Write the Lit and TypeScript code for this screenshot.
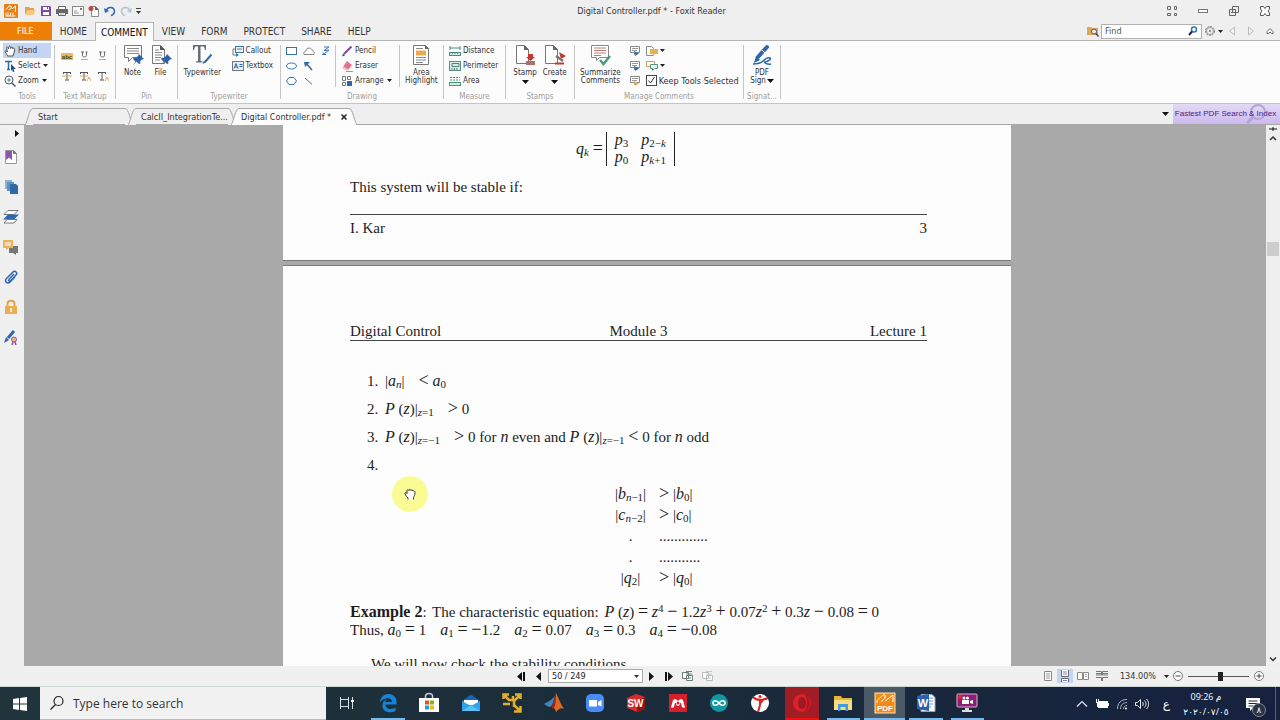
import { LitElement, html, svg, css, TemplateResult } from 'lit';
import { customElement } from 'lit/decorators.js';
import { classMap } from 'lit/directives/class-map.js';

const icon = (w: number, h: number, body: TemplateResult) =>
   html`<svg width="${w}" height="${h}" viewBox="0 0 ${w} ${h}" fill="none" aria-hidden="true">${body}</svg>`;

const caret = icon(5, 3, svg`<path fill="#222" d="M0 0h5L2.500 3z"/>`);
const bigCaret = icon(7, 4, svg`<path fill="#111" d="M0 0h7L3.500 4z"/>`);

// title bar
const logo = icon(14, 14, svg`
   <rect width="14" height="14" rx="1" fill="#ef7d0b"/>
   <path stroke="#fff" d="M2 12.500V8.500M2 5.500l3-3.500h2v2.500L4.500 6M8 5l3.500-3v6M2 12h9.500"/>
   <path stroke="#fff" d="M4 8.500v3M6.500 8.500v3M9 8.500v3"/>`);
const folder = icon(12, 12, svg`
   <path fill="#dda44a" d="M1 2h4l1 1h4v2H4l-3 5z"/><path fill="#f4c77d" d="M4 5h8l-3 5H1z"/>`);
const save = icon(12, 12, svg`
   <path fill="#7c4aa5" d="M1 1h9l1 1v9H1z"/><path fill="#fff" d="M3 2h6v3H3zM3 7h6v3H3z"/><path fill="#7c4aa5" d="M7 2h1v2H7z"/>`);
const print = icon(12, 12, svg`
   <path fill="#666" d="M0 4h12v5H0z"/><path fill="#fff" stroke="#666" d="M2.500 1.500h7v3h-7zM2.500 7.500h7v3h-7z"/><path stroke="#aaa" d="M4 9h4"/>`);
const mail = icon(12, 12, svg`
   <rect x=".5" y="1.500" width="11" height="9" fill="#fafafa" stroke="#888"/><path stroke="#999" d="M2 8h5M2 6h3"/><path fill="#777" d="M8 3h2v2H8z"/>`);
const newPdf = icon(12, 12, svg`
   <path fill="#fff" stroke="#888" d="M3.500 1.500h4l3 3v7h-7z"/><path fill="#666" d="M7 1l4 4H7z"/><circle cx="3" cy="3.500" r="2.500" fill="#c4473a"/>`);
const undo = icon(12, 12, svg`<path stroke="#2d68b0" stroke-width="1.500" d="M2.500 5C4 1.500 10 1.500 10.500 6c0 2.500-2 4-3.500 4.500"/><path fill="#2d68b0" d="M0 3l5 3-4 2z"/>`);
const redo = icon(12, 12, svg`<path stroke="#b5c3d6" stroke-width="1.500" d="M9.500 5C8 1.500 2 1.500 1.500 6c0 2.500 2 4 3.500 4.500"/><path fill="#b5c3d6" d="M12 3L7 6l4 2z"/>`);
const more = icon(5, 6, svg`<path stroke="#444" d="M0 .5h5"/><path fill="#333" d="M0 3h5L2.500 6z"/>`);
const fullIcon = icon(12, 12, svg`<path stroke="#666" d="M1.500 1.500h3v3h-3zM8.500 1.500h2v3h-2zM1.500 8.500h3v2h-3zM8.500 8.500h2v2h-2z"/>`);
const minIcon = icon(12, 12, svg`<rect x="1.500" y="4.500" width="9" height="3" fill="#fff" stroke="#777"/>`);
const maxIcon = icon(12, 12, svg`<path fill="#eee" stroke="#666" d="M4.500 1.500h6v6h-6zM1.500 4.500h6v6h-6z"/><path stroke="#666" d="M3 7.500h3"/>`);
const closeIcon = icon(12, 12, svg`<path fill="#fff" stroke="#555" d="M1.500 1.500h3L6 3.500l1.500-2h3V4L9 6l1.500 2v2.500h-3L6 8.500l-1.500 2h-3V8L3 6 1.500 4z"/>`);

// ribbon
const hand = icon(12, 12, svg`<path fill="#fff" stroke="#555" d="M3.500 11C3 9 1 7.500 1 6c1-.8 2 .5 2.500 1L2.500 2.500c.5-1 1.500-.5 2 1.500L5 1.500c1-.8 1.500 0 1.500 2L7.500 2c1-.5 1.500.5 1 2l1-1c1 0 1.500 1 1 3L9 11z"/>`);
const select = icon(12, 12, svg`<path stroke="#2d68a8" stroke-width="1.500" d="M1 1.500h7M4.500 1.500v8M3 9.500h3"/><path fill="#1c4f8a" d="M7 4l5 5H9.500l1 2.500-1.500.5-1-2.500L7 11z"/>`);
const zoomTool = icon(12, 12, svg`<circle cx="5" cy="5" r="4" stroke="#557"/><path stroke="#3b9576" d="M5 3v4M3 5h4"/><path stroke="#557" stroke-width="1.500" d="M8 8l3.500 3.500"/>`);
const abcMark = icon(12, 10, svg`<rect y="2" width="12" height="7" fill="#efb75e"/><text x="6" y="8" font-size="6" font-family="Liberation Sans" font-weight="700" text-anchor="middle" fill="#443">abc</text>`);
const uMark = icon(12, 10, svg`<path stroke="#666" d="M3.500 1v3.500c0 2 4 2 4 0V1M2 1h3M6.500 1h2"/><path stroke="#e3a84a" d="M2 8.500h7"/>`);
const tMark = icon(12, 12, svg`<path stroke="#555" d="M2 2.500h8M6 2.500v7M4 10h4M2.500 2v2M9.500 2v2"/><path stroke="#e3a84a" d="M1 6h10"/>`);
const tMark2 = icon(12, 12, svg`<path stroke="#555" d="M1 2.500h8M5 2.500v7M3 10h4M1.500 2v2M8.500 2v2"/><path stroke="#e3a84a" d="M1 6h8M8 11l2-4 2 4"/>`);
const tMark3 = icon(12, 12, svg`<path stroke="#555" d="M1 2.500h8M5 2.500v7M3 10h4M1.500 2v2M8.500 2v2"/><path stroke="#e3a84a" d="M8 11l2-4 2 4"/>`);
const pushPin = svg`<path fill="#2b62a5" d="M17 10l5 5-2 .5-2 2 .500 2-1.500.5-2.500-2.500L11 21l2.500-3.500L11 15l1-1.500 2 .5 2-2z"/>`;
const note = icon(22, 22, svg`<path fill="#fff" stroke="#777" d="M2.500 1.500h17v12h-9l-4 4v-4h-4z"/><path stroke="#888" d="M5 4.500h12M5 7h12M5 9.500h12"/>${pushPin}`);
const file = icon(22, 22, svg`<path fill="#fff" stroke="#777" d="M2.500 1.500h8l4 4v14h-12z"/><path fill="#555" d="M10 1l5 5h-5z"/><path stroke="#888" d="M5 6h4M5 8.500h7M5 11h7M5 13.500h6M5 16h5"/>${pushPin}`);
const typewriter = icon(22, 22, svg`<path fill="#666e76" d="M2 1h13v5h-1L13 2.500H9.500V17l2 .5v1H5v-1l2-.5V2.500H4L3 6H2z"/><path stroke="#2f6ea8" stroke-width="2" d="M20.500 10.500L14 18"/><path fill="#2f6ea8" d="M13 16.500l2 2-3.500 1.500z"/>`);
const callout = icon(12, 12, svg`<rect x="3.500" y="1.500" width="8" height="6" stroke="#3a77a8" fill="#eef4f8"/><path stroke="#777" d="M5 4h5M3 4H1v6h3"/><path fill="#3a77a8" d="M4 8l3 2-3 2z"/>`);
const textbox = icon(12, 12, svg`<rect x=".5" y="1.500" width="11" height="9" fill="#e6edf3" stroke="#777"/><path stroke="#2d68a8" d="M2 8.500l2-5 2 5M3 7h2M7.500 4.500h3M7.500 6.500h3"/>`);
const shapeRect = icon(12, 10, svg`<rect x=".5" y="1.500" width="10" height="7" fill="#fff" stroke="#3a74ad"/>`);
const shapeCloud = icon(12, 10, svg`<path stroke="#888" fill="#fff" d="M1 8.500C0 6 2 5 3 5c0-4 6-4 6.500 0 2 .5 2 2 1.500 3.500z"/>`);
const shapeLine = icon(12, 10, svg`<path stroke="#3a74ad" d="M4 1h5L4 4.500l5-.5-5 4-1-1.500M2 8.500h4"/>`);
const shapeEllipse = icon(12, 10, svg`<ellipse cx="5.500" cy="5" rx="5" ry="3" fill="#fff" stroke="#3a74ad"/>`);
const shapeArrow = icon(12, 10, svg`<path stroke="#2d68a8" stroke-width="1.500" d="M3 2l6 7"/><path fill="#2d68a8" d="M1 1h6L2 6z"/>`);
const shapePoly = icon(12, 10, svg`<path fill="#fff" stroke="#3a74ad" d="M3 1.500h5L10.500 5 8 8.500H3L.5 5z"/>`);
const shapeDiag = icon(12, 10, svg`<path stroke="#3a74ad" d="M2 2l7 6.500"/>`);
const pencil = icon(12, 12, svg`<path stroke="#7c4aa5" stroke-width="2" d="M10.500 1.500L3 9"/><path fill="#553" d="M1 11.500l1-3 2 2z"/>`);
const eraser = icon(12, 12, svg`<path fill="#e2728b" d="M6 1l5 4-4 5-5-3z"/><path fill="#f7c3cd" d="M2.500 6.500L7 9.500 6 11 1 8.500z"/><path stroke="#999" d="M5 11.500h7"/>`);
const arrange = icon(12, 12, svg`<path stroke="#777" fill="#fff" d="M1.500 1.500h3v4h-3zM1.500 7.500h3v3h-3zM6.500 1.500h3v3h-3z"/><path fill="#2d68a8" d="M6 6h5v5H6z"/>`);
const areaHighlight = icon(18, 22, svg`<path fill="#fff" stroke="#777" d="M1.500 1.500h12l3 3v16h-15z"/><path fill="#666" d="M13 1l4 4h-4z"/><path stroke="#888" d="M4 4.500h7M4 13.500h10M4 16h10M4 18.500h7"/><rect x="4" y="6.500" width="10" height="5" fill="#eda94b"/>`);
const distance = icon(12, 12, svg`<rect x=".5" y="7.500" width="11" height="3" fill="#d8ece5" stroke="#4a8f7c"/><path stroke="#4a8f7c" d="M1 1v4M11 1v4M1 3h10M3.500 8v1M6 8v1M8.500 8v1"/>`);
const perimeter = icon(12, 12, svg`<rect x=".5" y="1.500" width="11" height="9" fill="#d8ece5" stroke="#5a8f84"/><path stroke="#5a7f7c" d="M3 3.500h7v3H3zM3 8v2M5.500 8v2M8 8v2"/>`);
const area = icon(12, 12, svg`<rect x=".5" y="7.500" width="11" height="3" fill="#d8ece5" stroke="#4a8f7c"/><path stroke="#4a8f7c" stroke-dasharray="2 1" d="M1 2.500h10M1 5h10"/>`);
const stamp = icon(22, 22, svg`<path fill="#fff" stroke="#777" d="M2.500 1.500h8l4 4v14h-12z"/><path fill="#666" d="M10 1l5 5h-5z"/><path fill="#c0392f" d="M14 10h5v3h2l-4.500 4-4.500-4h2z"/><path fill="#a4766f" d="M12 17h9v4h-9z"/>`);
const create = icon(22, 22, svg`<path fill="#fff" stroke="#777" d="M1.500 1.500h8l4 4v14h-12z"/><path fill="#666" d="M9 1l5 5H9z"/><path fill="#c0392f" d="M15 8l7 4-5 3z"/><path stroke="#777" stroke-width="2.500" d="M12 12l7 5"/><path stroke="#c0392f" stroke-width="2" d="M11 19.500h9"/>`);
const summarize = icon(22, 22, svg`<path fill="#fff" stroke="#888" d="M2.500 1.500h17v12h-9l-3 3v-3h-5z"/><path stroke="#c07a6a" d="M5 4h12M5 6.500h12M5 9h12M5 11.500h7"/><path stroke="#4f9a80" stroke-width="2.500" d="M11 16l3.500 4L21 12"/>`);
const commentIn = (c: string) => icon(11, 11, svg`<path fill="#fff" stroke="#888" d="M1.500 1.500h9v6h-3l-2 2v-2h-4z"/><path stroke="#999" d="M3 3.500h6M3 5.500h5"/><path fill="${c}" d="M5 6l5 2.500L6 11z"/>`);
const noteGold = icon(12, 11, svg`<path fill="#fff" stroke="#888" d="M.5 1.500h5l2 2v7h-7z"/><path fill="#e9ae52" d="M4 4h8v5H9l-2 2V9H4z"/>`);
const noteDuo = icon(12, 11, svg`<path fill="#fff" stroke="#d3a050" d="M.5 1.500h8v5h-8z"/><path fill="#e9f1ec" stroke="#5f8f80" d="M4.500 4.500h7v4h-3l-2 2v-2h-2z"/>`);
const pdfSign = icon(22, 22, svg`<path stroke="#2d68a8" stroke-width="4" stroke-linecap="round" d="M16 3L7 13"/><path stroke="#fff" d="M11 6l3 3"/><path fill="#2d68a8" d="M5 12l4 4-6 3z"/><path stroke="#2d68a8" stroke-width="1.500" d="M2 20c6 0 8-1 10-3s5-4 7-3-3 4-5 4 2 3 6 2"/>`);

// side bar
const bookmark = icon(14, 16, svg`<path fill="#fff" stroke="#999" d="M1.500 1.500h8l3 3v10h-11z"/><path fill="#777" d="M9 1l4 4H9z"/><path fill="#8a55b0" d="M2 2h6v9L5 8.500 2 11z"/>`);
const pages = icon(14, 16, svg`<path fill="#8fb3d3" d="M1 1h7v9H1z"/><path fill="#5f92c2" d="M3 3h7v9H3z"/><path fill="#2d68a8" d="M6 5h6l2 2v8H6z"/>`);
const layers = icon(16, 16, svg`<path fill="#fff" stroke="#777" d="M5 1.500h10l-4 4H1z"/><path fill="#2d68b0" d="M5 5.500h11l-5 5H0z"/><path fill="#fff" stroke="#777" d="M4 10.500h10l-3 3.500H1z"/>`);
const comments = icon(16, 16, svg`<path fill="#777" d="M6 7h9v7h-2v2l-3-2H6z"/><path fill="#eab35f" d="M0 1h10v8H6l-3 2V9H0z"/><path stroke="#fff" d="M2 4h6M2 6h6"/>`);
const clip = icon(14, 16, svg`<path stroke="#2d68b0" stroke-width="1.500" d="M10 5L5 10.500c-1 1 .500 2.500 1.500 1.500L12 6c2-2-1-5-3-3L2.500 9.500c-2.500 3 1 6 3.500 3.500l5-5"/>`);
const lock = icon(14, 16, svg`<path stroke="#e0a34c" stroke-width="2" d="M3.500 8V5c0-4.500 7-4.500 7 0v3"/><rect x="1" y="7" width="12" height="8" fill="#e9ae52"/><path stroke="#fff" stroke-width="1.500" d="M7 9v4"/>`);
const signSide = icon(16, 16, svg`<path stroke="#2d68b0" stroke-width="3" d="M11 2L5 9"/><path fill="#2d68b0" d="M3 8l3 3-5 3z"/><circle cx="11" cy="10.500" r="2.500" stroke="#8a55b0" fill="#f1b57a"/><path stroke="#8a55b0" stroke-width="1.500" d="M10 13l-1 3M12 13l1 3"/>`);

// status bar
const firstPage = icon(9, 9, svg`<path fill="#111" d="M5 0v9L0 4.500zM6 0h2v9H6z"/>`);
const prevPage = icon(9, 9, svg`<path fill="#111" d="M7 0v9L2 4.500z"/>`);
const nextPage = icon(9, 9, svg`<path fill="#111" d="M2 0v9l5-4.500z"/>`);
const lastPage = icon(9, 9, svg`<path fill="#111" d="M4 0v9l5-4.500zM1 0h2v9H1z"/>`);
const viewPrev = (c: string, d: string) => icon(12, 12, svg`<path fill="#fff" stroke="${c}" d="M1.500 2.500h6v6h-6zM5.500 5.500h6v5h-6z"/><path stroke="${d}" d="M5 1.500h6M5 4h6M7 8h3"/>`);
const single = icon(10, 12, svg`<path fill="#fff" stroke="#888" d="M1.500 1.500h7v9h-7z"/><path stroke="#999" d="M3 4h4M3 6h4M3 8h4"/>`);
const continuous = icon(10, 12, svg`<path fill="#fff" stroke="#667" d="M1.500 0v6.500h7V0M1.500 12V8.500h7V12"/><path stroke="#889" d="M3 2h4M3 4h4M3 10.500h4"/>`);
const facing = icon(12, 12, svg`<path fill="#fff" stroke="#888" d="M.5 2.500h5v7h-5zM6.500 2.500h5v7h-5z"/><path stroke="#aaa" d="M8 4.500h2M8 6.500h2"/>`);
const facingCont = icon(12, 12, svg`<path stroke="#777" d="M0 1.500h5.500V5H0M12 1.500H6.500V5H12M0 7.500h5.500V11M12 7.500H6.500V11M0 3.500h5M7 3.500h5"/>`);
const minusIcon = icon(12, 12, svg`<circle cx="6" cy="6" r="4.500" fill="#fff" stroke="#777"/><path stroke="#444" d="M3.500 6h5"/>`);
const plusIcon = icon(12, 12, svg`<circle cx="6" cy="6" r="4.500" fill="#fff" stroke="#777"/><path stroke="#444" d="M3.500 6h5M6 3.500v5"/>`);

// find row
const findFolder = icon(12, 12, svg`<path fill="#e0a850" d="M0 2h4l1 1h6v7H0z"/><circle cx="7" cy="6.500" r="2.500" fill="#eee" stroke="#556"/><path stroke="#445" stroke-width="1.500" d="M9 8.500l2.500 3"/>`);
const lens = icon(10, 10, svg`<circle cx="6" cy="3.500" r="2.500" stroke="#2d78c4" stroke-width="1.500"/><path stroke="#224" stroke-width="2" d="M4 5.500L1 9"/>`);
const gear = icon(12, 12, svg`<circle cx="6" cy="6" r="4.500" stroke="#777" stroke-dasharray="2 1"/><circle cx="6" cy="6" r="3.500" stroke="#999"/><circle cx="6" cy="6" r="1" fill="#777"/>`);
const triLeft = icon(8, 10, svg`<path stroke="#bbb" fill="#f5f5f5" d="M6.500 1v8L1.500 5z"/>`);
const triRight = icon(8, 10, svg`<path stroke="#bbb" fill="#f5f5f5" d="M1.500 1v8l5-4z"/>`);
const collapse = icon(8, 8, svg`<path stroke="#666" fill="#fff" d="M4 1.500L7 4.500v2H5.500L4 5 2.500 6.500H1v-2z"/>`);

// task bar
const win = icon(16, 16, svg`<path fill="#fff" d="M1 3l6-1v5.500H1zM8 2l7-1v6.500H8zM1 8.500h6V14l-6-1zM8 8.500h7V15l-7-1z"/>`);
const searchIcon = icon(16, 16, svg`<circle cx="9.500" cy="6" r="4.500" stroke="#222" stroke-width="1.200"/><path stroke="#222" stroke-width="1.200" d="M6.500 9.500L1.500 14.500"/>`);
const taskView = icon(16, 16, svg`<path stroke="#d5dde2" d="M1.500 2v2.500h8V2M1.500 14v-2.500h8V14M1.500 4.500h8v7h-8zM13.500 2v12"/><path fill="#fff" d="M12 5h3v2h-3z"/>`);
const edge = icon(20, 20, svg`<path fill="#1683d8" d="M2 9.500C2.500 4 6 1 10.500 1 16 1 18.500 5 18.500 9v2.500H7.500c0 5 6 5.500 10 3V18c-5 2.500-12 1.500-13-4-.5-3 .5-6 4.500-8-2 2-1.500 3-1.500 3h6.500c0-5-8-5-12 .5z"/>`);
const store = icon(22, 22, svg`<path stroke="#ccd" stroke-width="1.500" d="M7.500 6V4.500c0-4 7-4 7 0V6"/><path fill="#fff" d="M1 6h20v14H1z"/><path fill="#e8502c" d="M7 8.500h4v4H7z"/><path fill="#7db51b" d="M12 8.500h4v4h-4z"/><path fill="#1f9ee3" d="M7 13.500h4v4H7z"/><path fill="#f9b513" d="M12 13.500h4v4h-4z"/>`);
const mailApp = icon(20, 20, svg`<path fill="#1465b4" d="M1 8l9-6.500L19 8v9H1z"/><path fill="#fff" d="M3 7h14v5H3z"/><path fill="#2da3ea" d="M1 8l9 5 9-5v10H1z"/><path fill="#55c3f7" d="M1 18l9-6 9 6z"/>`);
const vmware = icon(22, 22, svg`<path stroke="#e0b02c" stroke-width="2.500" d="M2.500 7V2.500H8M14 2.500h5.500V7M3 3l5 5h4V4M19 3l-6 6v6M2 12h7M13 19.500h6.500V14M19 19l-6-6"/>`);
const matlab = icon(22, 22, svg`<path fill="#3f86c0" d="M1 12l7-4 4-4-3 10-3 1z"/><path fill="#e0671f" d="M13 1c2 4 4 10 8 16-3-2-5 0-8 3-1-4-3-5-4-5 2-3 3-9 4-14z"/><path fill="#8c2c1c" d="M13 1c0 7 0 13-3 16l-2-3c3-3 4-9 5-13z"/>`);
const zoomApp = icon(20, 20, svg`<rect x="1" y="1" width="18" height="18" rx="5" fill="#4a8cf7"/><path fill="#fff" d="M4 7h8v6.500H4zM13 9l3.500-2v6.500L13 12z"/>`);
const solidworks = icon(20, 20, svg`<path fill="#d92b2b" d="M1 5l9-4 9 3v12l-8 3-10-4z"/><path fill="#8f1414" d="M11 8l8-4v12l-8 3z"/><text x="9.500" y="14" font-size="10" font-weight="700" font-family="Liberation Sans" text-anchor="middle" fill="#fff">SW</text>`);
const mendeley = icon(20, 20, svg`<path fill="#d71f2b" d="M1 1h18v18H1z"/><path fill="#fff" d="M3 14c1-1 1-8 4-8 1 0 2 1 3 2 1-1 2-2 3-2 3 0 3 7 4 8 0 1-2 1-3 0-1-2 0-4-2-4 0 2-1 3-2 3s-2-1-2-3c-2 0-1 2-2 4-1 1-3 1-3 0z"/><circle cx="10" cy="10" r="1.500" fill="#d71f2b"/>`);
const arduino = icon(20, 20, svg`<circle cx="10" cy="10" r="9" fill="#1197a0"/><path stroke="#fff" stroke-width="1.500" d="M10 10c-2-3-6-3-6 0s4 3 6 0 6-3 6 0-4 3-6 0z"/>`);
const dancer = icon(20, 20, svg`<circle cx="10" cy="10" r="9" fill="#fff"/><path stroke="#d22" stroke-width="2" d="M3 4c3 3 8 4 15 1M10 6v6l-2 7M10 11l3-4"/><circle cx="10" cy="3.500" r="1.500" fill="#d22"/>`);
const opera = icon(20, 20, svg`<circle cx="10" cy="10" r="9" fill="#dd1f2b"/><path fill="#b3141f" d="M12 1.500c7 2 9 14 0 17 4-3 4-14 0-17z"/><ellipse cx="10" cy="10" rx="4" ry="6" fill="#9c1a22"/>`);
const explorer = icon(20, 20, svg`<path fill="#e9b53d" d="M1 3h7l1 2h10v12H1z"/><path fill="#fbdc7c" d="M1 7h18v10H1z"/><path fill="#3f9adf" d="M5 11h10v7h-2.500v-4h-5v4H5z"/>`);
const foxit = icon(22, 22, svg`<rect x="1" y="1" width="20" height="20" fill="#f28a14" stroke="#fde3bd"/><path stroke="#fff" d="M3 11V9l6-6h2v3L7 10M11 9l8-6v7"/><text x="11" y="19" font-size="8" font-weight="700" font-family="Liberation Sans" text-anchor="middle" fill="#fff">PDF</text>`);
const word = icon(20, 20, svg`<path fill="#fff" stroke="#8ab" d="M5 1.500h11l3 3v14H5z"/><path stroke="#69b" d="M12 5h5M12 8h5M12 11h5M12 14h3"/><path fill="#2b5fb4" d="M1 3l12-2v17L1 16z"/><text x="7" y="14" font-size="11" font-weight="700" font-family="Liberation Sans" text-anchor="middle" fill="#fff">W</text>`);
const recorder = icon(22, 22, svg`<rect x="1" y="2" width="20" height="13" rx="1" fill="#8d1f72" stroke="#d9b5d1"/><path fill="#ddd" d="M9 16h4v2h3v2H6v-2h3z"/><path fill="#fff" d="M6 8h7v4H6zM14 9l3-1v4l-3-1z"/><circle cx="8" cy="6" r="1.500" fill="#fff"/><circle cx="11.500" cy="6" r="1.500" fill="#fff"/><circle cx="4" cy="5" r="2" fill="#e22"/>`);
const chevronUp = icon(12, 12, svg`<path stroke="#e5e8ec" stroke-width="1.200" d="M1 8.500L6 3.500l5 5"/>`);
const battery = icon(14, 12, svg`<rect x="3.500" y="3.500" width="9" height="6" fill="#fff" stroke="#fff"/><path stroke="#fff" d="M13.500 5v3M1.500 1v3M3.500 1v3M1 4.500h3M2.500 5v4"/>`);
const wifi = icon(12, 12, svg`<path stroke="#aab3c0" d="M1.500 11C1.500 5 5 1.500 11 1.500M4.500 11c0-4 2.500-6.500 6.500-6.500M7.500 11c0-2 1.500-3.500 3.500-3.500"/><circle cx="10" cy="10.500" r="1" fill="#fff"/>`);
const volume = icon(14, 12, svg`<path stroke="#e5e8ec" d="M.5 4.500h2l3-3v9l-3-3h-2zM7.500 4c1 1.500 1 2.500 0 4M9.500 2.500c2 2.500 2 4.500 0 7M11.500 1c3 3.500 3 6.500 0 10"/>`);
const notify = icon(14, 14, svg`<path fill="#fff" d="M0 1h14v10H7l-3 3v-3H0z"/><path stroke="#1a2744" d="M2.500 4h9M2.500 6.500h9M2.500 9h5"/>`);
const grabHand = icon(12, 14, svg`<path fill="#fff" stroke="#333" d="M4 12.500V11C2 9 .5 7 1 6s1.500-.5 2 .500V3.500c0-1 1.500-1 2 0 0-1.500 1.500-1.500 2 0 0-1 1.500-1 2 .500 1-.5 2 0 2 1.500 0 2.500-1 4-1.500 5v2"/>`);

@customElement('title-bar')
export class TitleBar extends LitElement {

   static styles = css`
      :host { display: block; }
      svg { display: block; }
      .title-bar { display: grid; grid-template-columns: 1fr auto 1fr; align-items: center; height: 22px; padding: 0 9px 0 4px; }
      .quick, .window { display: flex; align-items: center; }
      .quick { gap: 4px; }
      .window { gap: 19px; justify-content: flex-end; }
      .title { font-size: 9px; padding-left: 28px; }
      button { border: 0; background: none; padding: 0; font: inherit; color: inherit; }
      .app { margin-right: 2px; }
   `;

   render() {
      return html`
         <header class="title-bar">
            <div class="quick">
               <span class="app">${logo}</span>
               ${[['Open', folder], ['Save', save], ['Print', print], ['Email', mail], ['New', newPdf], ['Undo', undo], ['Redo', redo], ['Customize', more]].map(
                  ([label, pic]) => html`<button aria-label=${label}>${pic}</button>`)}
            </div>
            <div class="title">Digital Controller.pdf * - Foxit Reader</div>
            <div class="window">
               ${[['Full screen', fullIcon], ['Minimize', minIcon], ['Restore', maxIcon], ['Close', closeIcon]].map(
                  ([label, pic]) => html`<button aria-label=${label}>${pic}</button>`)}
            </div>
         </header>
      `;
   }
}

@customElement('ribbon-bar')
export class RibbonBar extends LitElement {

   static styles = css`
      :host { display: block; }
      svg { display: block; flex: none; }
      button { border: 0; background: none; padding: 0; font: inherit; color: inherit; white-space: nowrap; }
      .menu { display: flex; align-items: stretch; height: 18px; border-bottom: 1px solid #b4b4b4; }
      .tab { font-size: 10px; line-height: 17px; padding: 0 8px; }
      .tab.file { background: #ee7f06; color: #fff; padding: 0 18px 0 17px; font-size: 9px; }
      .tab.active { background: #fcfcfc; border: 1px solid #b4b4b4; border-bottom: 0; padding: 0 5px; margin: 0 0 -1px; height: 19px; color: #111; }
      .find { display: flex; align-items: center; gap: 2px; margin-left: auto; padding-right: 6px; }
      .find-box { display: flex; align-items: center; box-sizing: border-box; width: 101px; height: 15px; background: #fff; border: 1px solid #b0b0b0; padding: 0 3px; }
      .find-box input { flex: 1; min-width: 0; border: 0; padding: 0; background: none; outline: none; font: inherit; font-size: 9px; }
      .find-box input::placeholder { color: #555; opacity: 1; }
      .step { display: flex; margin-left: 3px; }
      .step + .step { margin-left: 9px; }
      .ribbon { display: flex; height: 63px; background: #fcfcfc; border-bottom: 1px solid #c4c4c4; padding-top: 1px; box-sizing: border-box; }
      .group { position: relative; display: flex; flex-direction: column; box-sizing: border-box; margin: 3px 0 4px; border-right: 1px solid #c6c6c6; }
      .body { display: flex; flex: 1; margin-top: -2px; }
      .name { color: #a0a0a0; font-size: 8px; line-height: 12px; text-align: center; white-space: nowrap; margin-bottom: -4px; }
      .tools { width: 55px; }
      .markup { width: 61px; }
      .pin { width: 62px; }
      .type { width: 103px; }
      .drawing { width: 163px; }
      .measure { width: 62px; }
      .stamps { width: 69px; }
      .manage { width: 169px; }
      .sign { width: 37px; }
      .rows { display: flex; flex-direction: column; padding: 0 4px; }
      .row { display: flex; align-items: center; gap: 2px; height: 15px; padding: 0 3px 0 1px; font-size: 8px; }
      .row svg + span + svg { margin-left: 1px; }
      .row.on { background: #c3d5f2; }
      .tools .rows { padding-left: 3px; }
      .marks { display: grid; grid-template-columns: repeat(3, 12px); justify-content: center; column-gap: 6px; align-content: start; row-gap: 9px; flex: 1; padding-top: 8px; }
      .big { display: flex; flex-direction: column; align-items: center; gap: 3px; font-size: 8px; line-height: 8px; padding: 1px 3px 0; }
      .big .line { display: flex; align-items: center; gap: 1px; }
      .bigs { display: flex; flex: 1; justify-content: center; }
      .shapes { display: grid; grid-template-columns: repeat(3, 12px); column-gap: 5px; grid-auto-rows: 15px; align-items: center; padding: 0 3px 0 5px; }
      .split { border-left: 1px solid #c6c6c6; margin: 2px 0 4px; }
      .manage .big { padding-left: 5px; }
      .manage-col { display: grid; grid-auto-rows: 15px; align-items: center; padding-left: 5px; }
      .pair { display: flex; align-items: center; gap: 6px; }
      .pair button { display: flex; align-items: center; gap: 2px; }
      .keep { display: flex; align-items: center; gap: 2px; font-size: 9px; white-space: nowrap; }
      .keep input { appearance: none; width: 11px; height: 11px; margin: 0; border: 1px solid #444; background: #fff url("data:image/svg+xml;utf8,<svg xmlns='http://www.w3.org/2000/svg' viewBox='0 0 9 9'><path fill='none' stroke='%23333' d='M1.500 4.500l2 2.500 4-6'/></svg>") center / 9px 9px no-repeat; box-sizing: border-box; }
   `;

   row(label: string, pic: TemplateResult, drop = false, on = false) {
      return html`<button class=${classMap({ row: true, on })}>${pic}<span>${label}</span>${drop ? caret : ''}</button>`;
   }

   big(pic: TemplateResult, lines: string[], drop: unknown = '') {
      return html`<button class="big">${pic}<span>${lines.map(l => html`<div>${l}</div>`)}</span>${drop}</button>`;
   }

   group(cls: string, name: string, body: TemplateResult) {
      return html`<section class="group ${cls}"><div class="body">${body}</div><div class="name">${name}</div></section>`;
   }

   render() {
      return html`
         <nav class="menu">
            <button class="tab file">FILE</button>
            ${['HOME', 'COMMENT', 'VIEW', 'FORM', 'PROTECT', 'SHARE', 'HELP'].map(
               t => html`<button class=${classMap({ tab: true, active: t === 'COMMENT' })}>${t}</button>`)}
            <div class="find">
               ${findFolder}
               <label class="find-box"><input type="text" placeholder="Find" aria-label="Find">${lens}</label>
               ${gear}${caret}
               <span class="step">${triLeft}</span><span class="step">${triRight}</span><span class="step">${collapse}</span>
            </div>
         </nav>
         <div class="ribbon">
            ${this.group('tools', 'Tools', html`<div class="rows">
               ${this.row('Hand', hand, false, true)}${this.row('Select', select, true)}${this.row('Zoom', zoomTool, true)}</div>`)}
            ${this.group('markup', 'Text Markup', html`<div class="marks">
               ${abcMark}${uMark}${uMark}${tMark}${tMark2}${tMark3}</div>`)}
            ${this.group('pin', 'Pin', html`<div class="bigs">${this.big(note, ['Note'])}${this.big(file, ['File'])}</div>`)}
            ${this.group('type', 'Typewriter', html`<div class="bigs">${this.big(typewriter, ['Typewriter'])}</div>
               <div class="rows">${this.row('Callout', callout)}${this.row('Textbox', textbox)}</div>`)}
            ${this.group('drawing', 'Drawing', html`
               <div class="shapes">${shapeRect}${shapeCloud}${shapeLine}${shapeEllipse}${shapeArrow}<i></i>${shapePoly}${shapeDiag}</div>
               <div class="split"></div>
               <div class="rows">${this.row('Pencil', pencil)}${this.row('Eraser', eraser)}${this.row('Arrange', arrange, true)}</div>
               <div class="split"></div>
               <div class="bigs">${this.big(areaHighlight, ['Area', 'Highlight'])}</div>`)}
            ${this.group('measure', 'Measure', html`<div class="rows">
               ${this.row('Distance', distance)}${this.row('Perimeter', perimeter)}${this.row('Area', area)}</div>`)}
            ${this.group('stamps', 'Stamps', html`<div class="bigs">
               ${this.big(stamp, ['Stamp'], bigCaret)}${this.big(create, ['Create'], bigCaret)}</div>`)}
            ${this.group('manage', 'Manage Comments', html`
               ${this.big(summarize, ['Summarize', 'Comments'])}
               <div class="manage-col">
                  <div class="pair"><button aria-label="Import">${commentIn('#2d78a8')}</button><button aria-label="Show">${noteGold}${caret}</button></div>
                  <div class="pair"><button aria-label="Export">${commentIn('#2d68a8')}</button><button aria-label="Filter">${noteDuo}${caret}</button></div>
                  <div class="pair"><button aria-label="Popup">${commentIn('#e9ae52')}</button>
                     <label class="keep"><input type="checkbox" checked>Keep Tools Selected</label></div>
               </div>`)}
            ${this.group('sign', 'Signat...', html`<div class="bigs">
               <button class="big">${pdfSign}<span><div>PDF</div><div class="line">Sign${bigCaret}</div></span></button></div>`)}
         </div>
      `;
   }
}

@customElement('doc-tabs')
export class DocTabs extends LitElement {

   static styles = css`
      :host { display: block; }
      svg { display: block; flex: none; }
      .strip { display: flex; align-items: flex-end; height: 21px; border-bottom: 1px solid #a8a8a8; padding-left: 25px; box-sizing: border-box; }
      .tab { display: flex; height: 16px; border: 0; background: none; padding: 0; font: inherit; font-size: 9px; color: inherit; }
      .tab + .tab { margin-left: -5px; }
      .label { display: flex; align-items: center; justify-content: space-between; box-sizing: border-box; width: 92px; border-top: 1px solid #a8a8a8; padding: 0 5px; white-space: nowrap; }
      .tab.active { z-index: 1; margin-bottom: -1px; height: 17px; }
      .active .label { background: #fcfcfc; width: 110px; padding: 0 2px; }
      .drop { margin: 0 4px 8px auto; border: 0; background: none; padding: 0; }
      .ad { position: relative; align-self: stretch; box-sizing: border-box; width: 107px; padding-right: 2px; background: linear-gradient(#e3daf5, #cbb9ee); color: #4b1e86; font: 8px/20px "Liberation Sans", Arial, sans-serif; text-decoration: none; text-align: center; white-space: nowrap; }
      .glass { position: absolute; right: 14px; top: 0; }
      .ad-text { position: relative; }
   `;

   slopes(fill: string) {
      return [
         icon(8, 17, svg`<path fill="${fill}" d="M0 17L8 .5V17z"/><path stroke="#a8a8a8" d="M0 17C3 13 4 .5 8 .5"/>`),
         icon(8, 17, svg`<path fill="${fill}" d="M8 17L0 .5V17z"/><path stroke="#a8a8a8" d="M8 17C5 13 4 .5 0 .5"/>`),
      ];
   }

   render() {
      const tabs = ['Start', 'CalcII_IntegrationTe...', 'Digital Controller.pdf *'];
      return html`
         <div class="strip">
            ${tabs.map((t, i) => {
               const active = i === 2;
               const [left, right] = this.slopes(active ? '#fcfcfc' : '#efefef');
               return html`<button class=${classMap({ tab: true, active })}>${left}<span class="label">${t}
                  ${active ? icon(6, 6, svg`<path stroke="#222" stroke-width="1.500" d="M.5.5l5 5M5.500.5l-5 5"/>`) : ''}</span>${right}</button>`;
            })}
            <button class="drop" aria-label="Tab list">${bigCaret}</button>
            <a class="ad" href="#">
               <span class="glass">${icon(20, 20, svg`<circle cx="12" cy="8" r="7" stroke="#b4a4d6" stroke-width="2"/><path stroke="#b4a4d6" stroke-width="3" d="M7 13l-6 6"/>`)}</span>
               <span class="ad-text">Fastest PDF Search &amp; Index</span>
            </a>
         </div>
      `;
   }
}

@customElement('pdf-view')
export class PdfView extends LitElement {

   static styles = css`
      :host { display: flex; min-height: 0; }
      svg { display: block; }
      button { border: 0; background: none; padding: 0; }
      .side { display: flex; flex-direction: column; align-items: center; width: 24px; background: #f0f0f0; box-sizing: border-box; padding-right: 2px; }
      .side button { display: flex; align-items: center; justify-content: center; width: 22px; height: 30px; }
      .side .expand { height: 17px; padding-left: 11px; }
      .grip { width: 4px; background: #a9a9a9; }
      .grip i { display: block; height: 30px; margin-top: 229px; background: radial-gradient(circle, #777 30%, transparent 40%) 0 0 / 2px 2px; }
      .canvas { flex: 1; min-width: 0; overflow: hidden; background: #a9a9a9; display: flex; flex-direction: column; align-items: center; }
      .page { position: relative; flex: none; box-sizing: border-box; width: 728px; padding: 0 84px 0 67px; background: #fdfdfd; color: #1c1c1c; font-family: "Liberation Serif", "Times New Roman", serif; font-size: 15px; line-height: 18px; }
      .first { height: 136px; border-bottom: 1px solid #777; }
      .second { height: 500px; margin-top: 4px; border-top: 1px solid #777; }
      .det { display: flex; justify-content: center; align-items: center; gap: 3px; padding: 7px 0 0; margin-right: 26px; }
      .matrix { display: grid; grid-template-columns: auto auto; column-gap: 13px; border: 1px solid #222; border-width: 0 1px; padding: 0 8px; line-height: 17px; }
      p { margin: 0; }
      .stable { padding-top: 12px; }
      .foot { display: flex; justify-content: space-between; border-top: 1px solid #444; margin-top: 18px; padding-top: 4px; }
      .head { display: grid; grid-template-columns: 1fr auto 1fr; border-bottom: 1px solid #444; padding-top: 56px; }
      .head :last-child { text-align: right; }
      i { font-style: italic; font-size: 16px; line-height: 0; }
      sub, sup { font-size: 11px; line-height: 0; }
      sub i { font-size: 11px; }
      sub { vertical-align: -2px; }
      sup { vertical-align: 5px; }
      .op { font-size: 18px; line-height: 0; }
      b { font-size: 16px; line-height: 0; }
      ol { list-style: none; margin: 26px 0 0 17px; padding: 0; line-height: 28px; }
      li { display: grid; grid-template-columns: 18px 1fr; white-space: pre; }
      .gap { padding-left: 14px; }
      .eqs { display: grid; grid-template-columns: 33px auto; column-gap: 12px; justify-items: start; margin: 5px 0 0 264px; line-height: 21px; }
      .eqs > :nth-child(odd) { justify-self: center; }
      .example { padding-top: 14px; white-space: nowrap; }
      .lead { padding: 0 2px; }
      .coefs { display: flex; gap: 14px; }
      .next { padding: 16px 0 0 21px; }
      .pointer { position: absolute; left: 109px; top: 210px; display: grid; place-items: center; width: 36px; height: 36px; border-radius: 50%; background: #fbfb96; }
      .scroll { display: flex; flex-direction: column; align-items: center; width: 14px; background: #efefef; box-sizing: border-box; padding: 2px 0 4px; }
      .track { flex: 1; display: flex; width: 12px; padding-top: 99px; }
      .thumb { width: 12px; height: 14px; background: #cdcdcd; }
   `;

   render() {
      const side: [string, TemplateResult][] = [['Bookmarks', bookmark], ['Pages', pages], ['Layers', layers], ['Comments', comments], ['Attachments', clip], ['Security', lock], ['Signatures', signSide]];
      const pz = html`<i>P</i> (<i>z</i>)|`;
      const op = (s: string) => html`<span class="op">${s}</span>`;
      const [eq, lt, gt, minus, plus] = ['=', '<', '>', '−', '+'].map(op);
      return html`
         <aside class="side">
            <button class="expand" aria-label="Expand">${icon(4, 7, svg`<path fill="#111" d="M0 0v7l4-3.500z"/>`)}</button>
            ${side.map(([label, pic]) => html`<button aria-label=${label}>${pic}</button>`)}
         </aside>
         <div class="grip"><i></i></div>
         <main class="canvas">
            <article class="page first">
               <div class="det">
                  <span><i>q</i><sub><i>k</i></sub> ${eq}</span>
                  <div class="matrix">
                     <span><i>p</i><sub>3</sub></span><span><i>p</i><sub>2−<i>k</i></sub></span>
                     <span><i>p</i><sub>0</sub></span><span><i>p</i><sub><i>k</i>+1</sub></span>
                  </div>
               </div>
               <p class="stable">This system will be stable if:</p>
               <footer class="foot"><span>I. Kar</span><span>3</span></footer>
            </article>
            <article class="page second">
               <header class="head"><span>Digital Control</span><span>Module 3</span><span>Lecture 1</span></header>
               <ol>
                  <li><span>1.</span><span>|<i>a</i><sub><i>n</i></sub>|<span class="gap">${lt} <i>a</i><sub>0</sub></span></span></li>
                  <li><span>2.</span><span>${pz}<sub><i>z</i>=1</sub><span class="gap">${gt} 0</span></span></li>
                  <li><span>3.</span><span>${pz}<sub><i>z</i>=−1</sub><span class="gap">${gt} 0 for <i>n</i> even and ${pz}<sub><i>z</i>=−1</sub> ${lt} 0 for <i>n</i> odd</span></span></li>
                  <li><span>4.</span></li>
               </ol>
               <div class="eqs">
                  <span>|<i>b</i><sub><i>n</i>−1</sub>|</span><span>${gt} |<i>b</i><sub>0</sub>|</span>
                  <span>|<i>c</i><sub><i>n</i>−2</sub>|</span><span>${gt} |<i>c</i><sub>0</sub>|</span>
                  <span>.</span><span>.............</span>
                  <span>.</span><span>...........</span>
                  <span>|<i>q</i><sub>2</sub>|</span><span>${gt} |<i>q</i><sub>0</sub>|</span>
               </div>
               <p class="example"><b>Example 2</b>:<span class="lead"> The characteristic equation: </span><i>P</i> (<i>z</i>) ${eq} <i>z</i><sup>4</sup> ${minus} 1.2<i>z</i><sup>3</sup> ${plus} 0.07<i>z</i><sup>2</sup> ${plus} 0.3<i>z</i> ${minus} 0.08 ${eq} 0</p>
               <p class="coefs"><span>Thus, <i>a</i><sub>0</sub> ${eq} 1</span><span><i>a</i><sub>1</sub> ${eq} ${minus}1.2</span><span><i>a</i><sub>2</sub> ${eq} 0.07</span><span><i>a</i><sub>3</sub> ${eq} 0.3</span><span><i>a</i><sub>4</sub> ${eq} ${minus}0.08</span></p>
               <p class="next">We will now check the stability conditions.</p>
               <div class="pointer">${grabHand}</div>
            </article>
         </main>
         <div class="scroll">
            ${icon(8, 16, svg`<path stroke="#111" d="M0 2h8M4 0v4"/><path stroke="#333" stroke-width="1.500" d="M1 13l3-3 3 3"/>`)}
            <div class="track"><div class="thumb"></div></div>
            ${icon(8, 6, svg`<path stroke="#333" stroke-width="1.500" d="M1 1.500l3 3 3-3"/>`)}
         </div>
      `;
   }
}

@customElement('status-bar')
export class StatusBar extends LitElement {

   static styles = css`
      :host { display: block; }
      svg { display: block; }
      button { display: block; border: 0; background: none; padding: 0; }
      .status { display: flex; align-items: center; height: 21px; background: #f0f0f0; border-bottom: 1px solid #cfd6d8; box-sizing: border-box; padding: 0 15px 0 40%; font-size: 9px; }
      .pages { display: flex; align-items: center; gap: 8px; padding-left: 5px; }
      select { appearance: none; box-sizing: border-box; width: 95px; height: 14px; margin: 0 -4px 0 -3px; border: 1px solid #aaa; border-radius: 0; padding: 0 3px; font: inherit; color: #222; background: #fff url("data:image/svg+xml;utf8,<svg xmlns='http://www.w3.org/2000/svg' viewBox='0 0 5 3'><path fill='%23333' d='M0 0h5L2.500 3z'/></svg>") right 3px center / 5px 3px no-repeat; }
      .view { display: flex; align-items: center; gap: 7px; margin-left: auto; }
      .on { background: #c3d5f2; padding: 1px 3px; margin: 0 -3px; }
      .zoom { display: flex; align-items: center; }
      .pct { margin: 0 8px 0 5px; }
      input { appearance: none; width: 61px; height: 10px; margin: 0 4px; background: linear-gradient(#555, #555) center / 100% 1px no-repeat; }
      input::-webkit-slider-thumb { appearance: none; width: 5px; height: 9px; background: #222; }
      .minus { margin-left: 3px; }
   `;

   render() {
      return html`
         <footer class="status">
            <div class="pages">
               <button aria-label="First page">${firstPage}</button>
               <button aria-label="Previous page">${prevPage}</button>
               <select aria-label="Page"><option>50 / 249</option></select>
               <button aria-label="Next page">${nextPage}</button>
               <button aria-label="Last page">${lastPage}</button>
               <button aria-label="Previous view">${viewPrev('#777', '#3b9576')}</button>
               <button aria-label="Next view">${viewPrev('#bbb', '#b9cfc8')}</button>
            </div>
            <div class="view">
               <button aria-label="Single page">${single}</button>
               <button class="on" aria-label="Continuous">${continuous}</button>
               <button aria-label="Facing">${facing}</button>
               <button aria-label="Continuous facing">${facingCont}</button>
               <div class="zoom">
                  <span class="pct">134.00%</span>${caret}
                  <button class="minus" aria-label="Zoom out">${minusIcon}</button>
                  <input type="range" aria-label="Zoom" min="0" max="100" value="53">
                  <button aria-label="Zoom in">${plusIcon}</button>
               </div>
            </div>
         </footer>
      `;
   }
}

@customElement('task-bar')
export class TaskBar extends LitElement {

   static styles = css`
      :host { display: block; }
      svg { display: block; flex: none; }
      button { display: flex; align-items: center; justify-content: center; border: 0; background: none; padding: 0; color: inherit; font: inherit; }
      .bar { display: flex; height: 33px; background: linear-gradient(90deg, #20353b, #1b2c3a 50%, #16213f); color: #fff; }
      .start { width: 40px; }
      .search { display: flex; align-items: center; gap: 8px; box-sizing: border-box; width: 286px; padding-left: 9px; background: #f1f1f1; border-bottom: 1px solid #bbb; color: #333; }
      .search input { flex: 1; min-width: 0; border: 0; padding: 0; outline: none; background: none; font: 12px "Open Sans", "Noto Sans", sans-serif; }
      .search input::placeholder { color: #333; opacity: 1; }
      .apps { display: grid; grid-template-columns: repeat(16, 1fr); width: 662px; }
      .app { border-bottom: 2px solid transparent; margin: 0 4px; padding-top: 1px; }
      .run { border-color: #76b9ed; }
      .focus { background: #4c5a68; margin: 0; }
      .red { background: #a01d25; border-color: #f01010; }
      .tray { display: flex; align-items: center; margin-left: auto; gap: 7px; padding-right: 4px; }
      .lang { font: 12px "DejaVu Sans", sans-serif; padding: 0 6px 0 7px; }
      .clock { font: 9px/15px "Open Sans", "DejaVu Sans", sans-serif; text-align: center; width: 46px; }
      .note { position: relative; display: block; padding: 0 8px; margin-left: 2px; }
      .badge { position: absolute; left: 14px; top: 6px; width: 12px; height: 12px; border: 1px solid #888; border-radius: 50%; background: #2b3349; font: 9px/12px "DejaVu Sans", sans-serif; text-align: center; }
      .peek { align-self: stretch; border-left: 1px solid #56607a; }
   `;

   render() {
      const apps: [string, TemplateResult, string][] = [
         ['Task View', taskView, ''], ['Edge', edge, 'run'], ['Store', store, ''], ['Mail', mailApp, ''],
         ['VMware', vmware, ''], ['MATLAB', matlab, ''], ['Zoom', zoomApp, ''], ['SolidWorks', solidworks, ''],
         ['Mendeley', mendeley, ''], ['Arduino', arduino, ''], ['Reader', dancer, ''], ['Opera', opera, 'red'],
         ['File Explorer', explorer, 'run'], ['Foxit Reader', foxit, 'run focus'], ['Word', word, 'run'], ['Recorder', recorder, 'run'],
      ];
      return html`
         <div class="bar">
            <button class="start" aria-label="Start">${win}</button>
            <label class="search">${searchIcon}<input type="text" placeholder="Type here to search" aria-label="Search"></label>
            <div class="apps">${apps.map(([name, pic, cls]) => html`<button class="app ${cls}" aria-label=${name}>${pic}</button>`)}</div>
            <div class="tray">
               ${chevronUp}${battery}${wifi}${volume}
               <span class="lang">ع</span>
               <div class="clock"><div>09:26 م</div><div>٢٠٢٠/٠٧/٠٥</div></div>
               <button class="note" aria-label="Notifications">${notify}<span class="badge">٨</span></button>
               <span class="peek"></span>
            </div>
         </div>
      `;
   }
}

@customElement('app-root')
export class AppRoot extends LitElement {

   static styles = css`
      :host { display: flex; flex-direction: column; height: 100vh; overflow: hidden; background: #efefef; color: #333; font-family: "DejaVu Sans Condensed", "Noto Sans", sans-serif; }
      .view { flex: 1; }
   `;

   render() {
      return html`
         <title-bar></title-bar>
         <ribbon-bar></ribbon-bar>
         <doc-tabs></doc-tabs>
         <pdf-view class="view"></pdf-view>
         <status-bar></status-bar>
         <task-bar></task-bar>
      `;
   }
}
